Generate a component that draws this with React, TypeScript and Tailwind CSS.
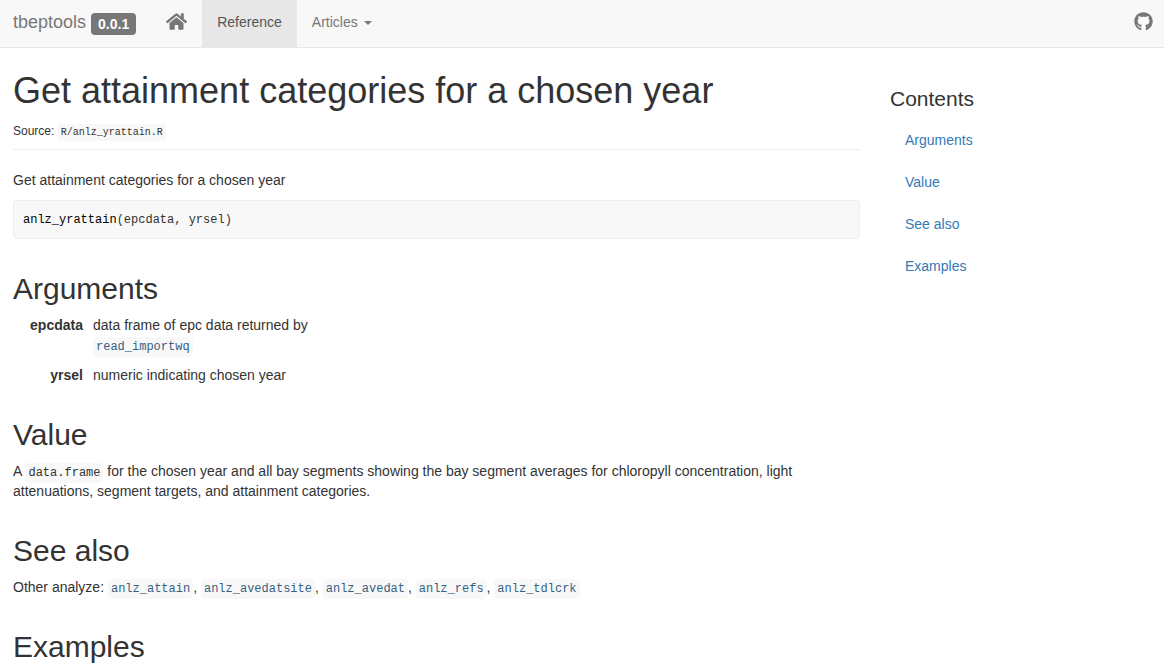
import type { ReactNode } from "react";
import { FaGithub, FaHome } from "react-icons/fa";

const related = ["anlz_attain", "anlz_avedatsite", "anlz_avedat", "anlz_refs", "anlz_tdlcrk"];

const contents = [
  { id: "arguments", label: "Arguments" },
  { id: "value", label: "Value" },
  { id: "see-also", label: "See also" },
  { id: "examples", label: "Examples" },
];

function Code({ children }: { children: ReactNode }) {
  return (
    <code className="rounded bg-[#f8f8f8] px-[3px] py-[3px] font-['Liberation_Mono',monospace] text-[12px] leading-none text-[#333]">
      {children}
    </code>
  );
}

function CodeLink({ name }: { name: string }) {
  return (
    <Code>
      <a href={`#${name}`} className="text-[#375f84] hover:underline">
        {name}
      </a>
    </Code>
  );
}

function SectionTitle({ id, children }: { id: string; children: ReactNode }) {
  return (
    <h2 id={id} className="mt-[33px] mb-[10px] text-[30px] leading-[33px]">
      {children}
    </h2>
  );
}

function Navbar() {
  return (
    <header className="border-b border-[#e7e7e7] bg-[#f8f8f8] text-[#777]">
      <nav className="flex items-stretch pr-[11px] pl-[13px]">
        <div className="flex items-start pt-3 pr-[15px]">
          <a href="#home" className="text-[18px] leading-5">
            tbeptools
          </a>
          <span className="mt-px ml-[5px] rounded bg-[#777] px-[7px] text-[14px] leading-[22px] font-bold text-white">
            0.0.1
          </span>
        </div>
        <a href="#home" aria-label="Home" className="px-[15px] pt-3">
          <FaHome className="h-[19px] w-[21px]" />
        </a>
        <a href="#reference" className="bg-[#e7e7e7] px-[15px] pt-3 pb-[15px] text-[#555]">
          Reference
        </a>
        <button type="button" className="flex items-start px-[15px] pt-3">
          Articles
          <span className="mt-[9px] ml-[6px] border-x-4 border-t-4 border-x-transparent border-t-[#777]" />
        </button>
        <a href="#github" aria-label="GitHub" className="ml-auto pt-3">
          <FaGithub className="h-[19px] w-[19px]" />
        </a>
      </nav>
    </header>
  );
}

export default function App() {
  return (
    <div className="min-h-screen bg-white font-['Liberation_Sans',Arial,sans-serif] text-[14px] leading-5 text-[#333]">
      <Navbar />
      <div className="flex gap-[30px] pl-[13px]">
        <main className="min-w-0 flex-1 pt-[23px]">
          <div className="border-b border-[#eee] pb-2">
            <h1 className="mb-[10px] text-[36px] leading-10">Get attainment categories for a chosen year</h1>
            <p className="text-[12px] leading-5">
              Source:{" "}
              <code className="rounded bg-[#f8f8f8] px-[3px] py-[3px] font-['Liberation_Mono',monospace] text-[10px] leading-none">
                R/anlz_yrattain.R
              </code>
            </p>
          </div>
          <p className="mt-5 mb-[10px]">Get attainment categories for a chosen year</p>
          <pre className="rounded border border-[#eee] bg-[#f8f8f8] px-[9px] pt-[9px] pb-[7px] font-['Liberation_Mono',monospace] text-[12px] leading-[21px]">
            <span className="text-black">anlz_yrattain</span>(epcdata, yrsel)
          </pre>

          <SectionTitle id="arguments">Arguments</SectionTitle>
          <dl className="grid max-w-[310px] grid-cols-[70px_1fr] gap-[10px]">
            <dt className="text-right font-bold">epcdata</dt>
            <dd>
              data frame of epc data returned by <CodeLink name="read_importwq" />
            </dd>
            <dt className="text-right font-bold">yrsel</dt>
            <dd>numeric indicating chosen year</dd>
          </dl>

          <SectionTitle id="value">Value</SectionTitle>
          <p>
            A <Code>data.frame</Code> for the chosen year and all bay segments showing the bay segment averages for
            chloropyll concentration, light attenuations, segment targets, and attainment categories.
          </p>

          <SectionTitle id="see-also">See also</SectionTitle>
          <p>
            Other analyze:{" "}
            {related.map((name, i) => (
              <span key={name}>
                {i > 0 && ", "}
                <CodeLink name={name} />
              </span>
            ))}
          </p>

          <SectionTitle id="examples">Examples</SectionTitle>
        </main>

        <aside className="w-[274px] shrink-0 pt-[39px]">
          <h2 className="text-[21px] leading-[23px]">Contents</h2>
          <nav className="mt-[10px] flex flex-col gap-[2px]">
            {contents.map(({ id, label }) => (
              <a key={id} href={`#${id}`} className="px-[15px] py-[10px] text-[#337ab7]">
                {label}
              </a>
            ))}
          </nav>
        </aside>
      </div>
    </div>
  );
}
